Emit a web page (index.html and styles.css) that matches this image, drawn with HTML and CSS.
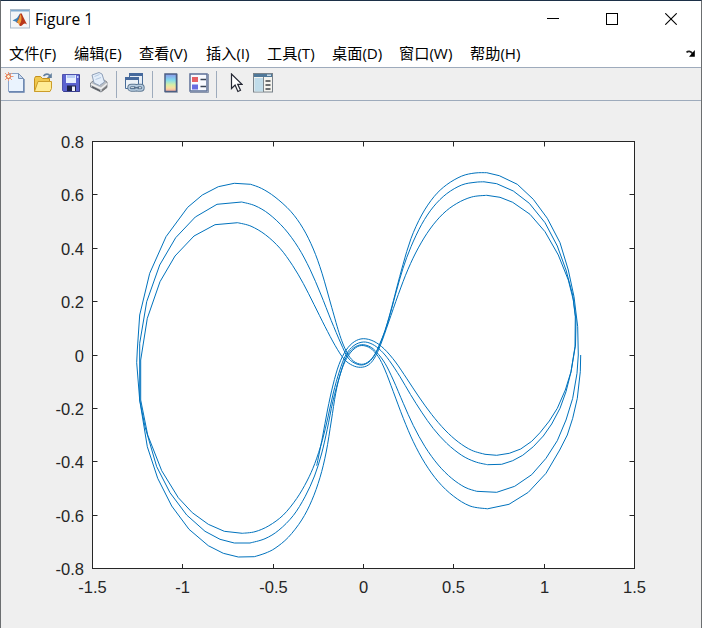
FILE: index.html
```html
<!DOCTYPE html>
<html lang="zh-CN">
<head>
<meta charset="utf-8">
<title>Figure 1</title>
<link rel="stylesheet" href="styles.css">
</head>
<body>
<div class="window">
  <header class="titlebar">
    <svg class="logo" width="20" height="20" viewBox="0 0 20 20">
      <rect x=".5" y=".5" width="19" height="18.5" fill="#f3f5f7" stroke="#a9b9c9"/>
      <path d="M1 1h18v1.5H1z" fill="#7faad0"/>
      <path d="M2.500 11.500 7 9l3-4.500 1.500 2-4 7.500-2-1.500z" fill="#3c7fb5"/>
      <path d="M10 5c1.500-2 2 0 3 2.500l4 8c-2-2-3.500-1-4.500.5-1 1-2 1.500-3 .5C9 14 8 13 6.500 13.500 8.500 11 9 8 10 5z" fill="#b9371b"/>
      <path d="M10.500 5c1.500 3 1.500 8-1.500 11-.5-2-1-3-2.500-2.500 2-2 3-5 4-8.500z" fill="#f0a03c"/>
    </svg>
    <span class="title">Figure 1</span>
    <div class="controls">
      <svg width="12" height="12"><path d="M0 5.500h12" stroke="#000"/></svg>
      <svg width="12" height="12"><rect x=".5" y=".5" width="11" height="11" fill="none" stroke="#000"/></svg>
      <svg width="12" height="12"><path d="M.3.3l11.400 11.400M11.700.3.3 11.700" stroke="#000" stroke-width="1.100"/></svg>
    </div>
  </header>
  <nav class="menubar">
    <span>文件(F)</span><span>编辑(E)</span><span>查看(V)</span><span>插入(I)</span><span>工具(T)</span><span>桌面(D)</span><span>窗口(W)</span><span>帮助(H)</span>
    <svg class="dock" width="10" height="8"><path d="M.5 2.500C2 .8 4.500.8 6.500 3.500" fill="none" stroke="#222" stroke-width="1.800"/><path d="M8.800 0v6.800H3z" fill="#000"/></svg>
  </nav>
  <div class="toolbar">
    <svg class="tool new" width="20" height="22" viewBox="0 0 20 22">
      <path d="M3.500 1.500h10l5 5v13h-15z" fill="#eaf3fe" stroke="#8ba2c5"/><path d="M4 20h15V7" fill="none" stroke="#617eaa" stroke-width="1.300"/><path d="M13.500 1.500v5h5z" fill="#c9daf0" stroke="#7890b5"/>
      <path d="M0 1l7 7M7 1 0 8M3.500 0v9M-.5 4.500h9" stroke="#ef9a78"/><circle cx="3.500" cy="4.500" r="2" fill="#fff0cf" stroke="#dc6439"/>
    </svg>
    <svg class="tool open" width="20" height="22" viewBox="0 0 20 22">
      <path d="M1.500 19.500V6.500l1-2h5l2 2h7v3" fill="#f0c84e" stroke="#c4901d"/><path d="M1.500 19.500 5 9.500h13.500v7l-1.500 3z" fill="#ffec96" stroke="#cc9d29"/><path d="M10.500 4c2-2.500 5-2.500 6.500 0" fill="none" stroke="#63809f" stroke-width="1.600"/><path d="M18.800 1v5h-5z" fill="#63809f"/>
    </svg>
    <svg class="tool save" width="20" height="22" viewBox="0 0 20 22">
      <path d="M1.500 2.500h17v17h-16l-1-1z" fill="#5b62d0" stroke="#5053ad"/><path d="M18.500 3v16.500h-16" fill="none" stroke="#3a3f8f"/><path d="M5 3h10v8H5z" fill="#e7efff"/><path d="M6 3h8v3H6z" fill="#b9ccf6"/><path d="M6 13.500h9V19H6z" fill="#202449"/><path d="M11 14.500h3V19h-3z" fill="#eef1fb"/><path d="M16 4h1.500v2H16z" fill="#c5d2ff"/>
    </svg>
    <svg class="tool print" width="20" height="22" viewBox="0 0 20 22">
      <path d="M1.500 11 6 7.500 12 6l6 4v5.500l-6 4.500-10.500-5z" fill="#b9bdc2" stroke="#858a91"/><path d="m5 11-2-8 7-2.500L13 2l2.500 8-5 3.500z" fill="#e4eefa" stroke="#8fa0b8"/><path d="m5.500 4.500 5-2M6.500 7.500l5.500-2" stroke="#b3c8e0"/><path d="m2 12 10 4.500 6-5" fill="none" stroke="#f0f0f0" stroke-width="1.500"/><path d="m3 14 8 4v1.500l-8-4z" fill="#55585e"/><path d="m13 17.500 5-4v2l-5 4z" fill="#777"/>
    </svg>
    <i class="separator"></i>
    <svg class="tool link" width="20" height="22" viewBox="0 0 20 22">
      <path d="M4.500 1.500h13v11h-13z" fill="#e6edf5" stroke="#496d99"/><path d="M4 1h14v3H4z" fill="#46699c"/><path d="M.5 5.500h13v11H.5z" fill="#edf2f7" stroke="#496d99"/><path d="M0 5h14v3H0z" fill="#46699c"/><g fill="none" stroke="#5f7993" stroke-width="3.400"><rect x="4" y="13.500" width="8" height="4.500" rx="2.200"/><rect x="11" y="13.500" width="7" height="4.500" rx="2.200"/></g><g fill="none" stroke="#b9cee2" stroke-width="1.400"><rect x="4" y="13.500" width="8" height="4.500" rx="2.200"/><rect x="11" y="13.500" width="7" height="4.500" rx="2.200"/></g><path d="M9 15.700h5" stroke="#59718b" stroke-width="1.500"/>
    </svg>
    <i class="separator"></i>
    <svg class="tool colorbar" width="14" height="20" viewBox="0 0 14 20">
      <defs><linearGradient id="spectrum" x2="0" y2="1"><stop stop-color="#8a97ec"/><stop offset=".35" stop-color="#83dced"/><stop offset=".62" stop-color="#d7efa5"/><stop offset=".8" stop-color="#fbdda0"/><stop offset="1" stop-color="#f3a5a0"/></linearGradient></defs><rect x="1" y="1" width="11.500" height="17.500" fill="url(#spectrum)" stroke="#4c5f84" stroke-width="1.500"/><path d="M13.500 1v18.500H1" fill="none" stroke="#9aa3b3"/>
    </svg>
    <svg class="tool legend" width="20" height="20" viewBox="0 0 20 20">
      <rect x="1" y="1" width="17" height="17" fill="#f8faff" stroke="#5d7098" stroke-width="1.500"/><path d="M19.500 1v18.500H1" fill="none" stroke="#8d98ad"/><path d="M3 4h6v5H3z" fill="#e75f63"/><path d="M3 11.500h6v5H3z" fill="#686be0"/><path d="M11.500 6.500H17M11.500 13.500H17" stroke="#394354" stroke-width="1.500"/>
    </svg>
    <i class="separator"></i>
    <svg class="tool pointer" width="13" height="20" viewBox="0 0 13 20"><path d="M1.500 1v14.500l3.600-3.500 2.800 6.500 2.600-1.200-2.800-6H12z" fill="#fff" stroke="#242733" stroke-width="1.200"/></svg>
    <svg class="tool inspector" width="20" height="20" viewBox="0 0 20 20"><rect x=".5" y=".5" width="19" height="18.500" fill="#f4f3ee" stroke="#79828a"/><path d="M1 1h18v3H1z" fill="#4f7899"/><path d="M14 1.500h4v1.500h-4z" fill="#cbdce7"/><path d="M1.500 5h8.500v13.500H1.500z" fill="#c0dcea"/><path d="M10.500 4v15" stroke="#7c868c"/><path d="M12.500 8h5M12.500 12h5M12.500 16h5" stroke="#3d4347" stroke-width="1.600"/></svg>
  </div>
  <main class="figure">
    <svg class="plot" width="700" height="527" viewBox="1 101 700 527">
      <rect x="92.500" y="141.500" width="542" height="427.500" fill="#fff"/>
      <g id="trajectory"></g>
      <rect class="axis" x="92.500" y="141.500" width="542" height="427"/>
      <g id="ticks"></g>
    </svg>
  </main>
</div>
<script src="plot.js"></script>
</body>
</html>
```
FILE: styles.css
```css
* { box-sizing: border-box; }
body { margin: 0; background: #efefef; overflow: hidden; }
.window {
  width: 702px;
  height: 628px;
  display: flex;
  flex-direction: column;
  border: 1px solid #6b6e70;
  border-top-color: #1c3048;
  border-bottom: 0;
  background: #fff;
  font-family: "Open Sans", "Noto Sans CJK SC", sans-serif;
  color: #000;
}
.titlebar {
  height: 36px;
  flex: none;
  display: flex;
  align-items: center;
  padding: 0 24px 0 9px;
}
.title { margin-left: 5px; font-size: 15.6px; line-height: 20px; }
.controls { margin-left: auto; display: flex; gap: 47px; }
.controls svg { display: block; }
.menubar {
  height: 30px;
  flex: none;
  display: flex;
  align-items: center;
  padding: 1px 5px 0 8px;
  font-size: 15.2px;
  line-height: 22px;
  white-space: nowrap;
}
.menubar span { width: 65px; }
.menubar span:nth-child(3) { width: 67px; }
.menubar span:nth-child(4) { width: 61px; }
.menubar span:nth-child(6) { width: 67px; }
.menubar span:nth-child(7) { width: 71px; }
.dock { margin-left: auto; margin-top: 2px; }
.toolbar {
  height: 34px;
  flex: none;
  display: flex;
  align-items: center;
  padding-left: 4px;
  background: #efefef;
  border-top: 1px solid #9eabbc;
  border-bottom: 1px solid #9eabbc;
}
.tool { flex: none; margin-right: 8px; position: relative; top: -1px; }
.print { margin-right: 7px; }
.separator { width: 1px; height: 27px; background: #9eabbc; margin-right: 8px; }
.link { margin-right: 7px; }
.colorbar { margin: 0 11px 0 3px; }
.legend { margin-right: 7px; }
.pointer { margin: 0 10px 0 5px; }
.figure { flex: 1; min-height: 0; background: #efefef; }
.plot { display: block; }
.plot text { font: 16.5px "Liberation Sans", Arial, sans-serif; fill: #262626; }
.x-label { text-anchor: middle; }
.y-label { text-anchor: end; }
.axis { fill: none; stroke: #262626; stroke-width: 1; }
.curve { fill: none; stroke: #0072bd; stroke-width: 1; stroke-linejoin: round; }
```
FILE: plot.js
```js
const NS = "http://www.w3.org/2000/svg";
function add(parent, tag, attrs, text) {
  const el = document.createElementNS(NS, tag);
  for (const key in attrs) el.setAttribute(key, attrs[key]);
  if (text !== undefined) el.textContent = text;
  parent.appendChild(el);
}

const segments = [
  ["L", "580.7,355 580.3,371.7 577.3,398.3 572.7,418.3 567.3,435 559.7,450 546,473.3 528.3,492.3 509,504.3 487.5,508.8"],
  ["C", "487.5,508.8 470,506 453.3,496 438.3,481.7 425,463.3 413.3,441.7 403.3,418.3 393.3,391.7 385,370 378.3,356.7 370.5,348.3 361.7,345.5 354,349 346.7,358.3 340.5,373.3 335.7,393.3 331.3,421 326.2,452 320,477.500 311.7,500.7 301.7,520 288.3,537.3 275,548.3 265,553.3 254.3,556.7"],
  ["L", "254.3,556.7 238.3,557 223.3,553.3 208.3,545.7 189,529.3 171.7,506 157.7,478.3 147.3,446.7 139.7,400 136.7,362.7 137.3,350 139.7,315 149.7,273.3 166,236.7 187.7,207.3 202.3,195 218.3,186.7 234.3,183.3 250.7,184.3"],
  ["C", "250.7,184.3 261.7,188.500 275,197 290.7,211.3 303,228.3 313.3,249 322,273.2 331.7,307.3 340,335.7 346.7,352 353.3,361 361.7,364.3 369,361.3 375,354 380,343.3 385,330.500 390.3,312.5 396.7,288 403,264.5 411,238.500 421.700,215 434,196.700 446.7,184.7 461.7,176.1 475,173 486.7,172.7"],
  ["L", "486.7,172.7 499.3,175.7 517.3,184.3 533.3,199.3 547.3,218.3 560,242.7 568.3,270 574,296.7 577.7,326.7 578.3,355 577,373.3 572.7,398.3 566,420 557.3,440.7 546,458.3 531.7,474.7 514.7,486.3 496.7,492.3 476.7,491.3"],
  ["C", "476.7,491.3 465,487.3 451.7,478.3 438.3,465 425,446.7 413.3,425.5 403.3,403.3 393.3,380 385,363.3 376.7,352.3 370,346.7 361.7,344.7 353.5,348 346.2,357 340,375 332.8,401.7 327.2,429.500 321.500,454 314.500,476 305,496.8 293.3,515.5 278.8,530.2 265,538.7 250,543"],
  ["L", "250,543 234.3,543 220,539.3 205,531.3 186.7,515 170,492.7 156.7,466.7 145,426.7 139.7,400 139.7,343.3 146.7,301.7 159.7,265 175.7,237.7 195.3,217 217,204.3 241.7,202"],
  ["C", "241.7,202 255,205.7 269,214 284.5,228.7 298.3,247.5 310,269.3 320.7,294 331.2,320.5 340.7,343 347.5,357 354,362.8 361.7,365 369,362 375,354.5 380,344 385,331 390.3,313.500 396.700,290 403,268.3 411,246.7 421.7,224.3 433.3,206.9 446.7,193.7 461.7,185 475,182.3 484,181.8"],
  ["L", "484,181.8 496.7,183.7 513.3,191 529.3,203.3 545,222.7 557.3,246 566,270 572.7,295 576,320 575.5,345 571,372 566,391.7 560,408.3 551.7,424 543.3,436 533.3,446.7 522.7,455.3 512.7,460.7 501.7,464.3 487.5,464.7"],
  ["C", "487.5,464.7 475,461.7 461.7,455.3 446.7,443.3 433.3,428.5 421.7,412.2 410.500,394.5 400,376.7 389.3,360.500 381,350.7 372.3,344.2 363.3,342 354,345.500 345.8,355 339.5,371 333.3,393 328,417 322.3,440.500 314.8,463.500 307,481 296.7,498.500 283.3,515 268.8,525.8 255,531.7 242.3,533.3"],
  ["L", "242.3,533.3 224.3,531.3 208.3,524.3 192.3,512.7 178.3,497.7 161.7,470.7 147.7,435 140.7,400 140.7,360 147.3,318.3 160,281.7 175,256 194,236 215,224.7 237.7,222.7"],
  ["C", "237.7,222.7 251,226.2 265.500,234.8 280,248.3 292.500,265.3 303.3,283.5 314,304.5 325,326.500 335,345.3 344,359 352.5,365.4 360.7,367.3 368.3,365 374.5,358 380.5,345 388.7,322 398.3,294.500 408,269.3 418.3,247.9 430,229 443,213.8 456.7,203.500 471.7,197 486.7,195.3"],
  ["L", "486.7,195.3 500,197.3 512.7,202.3 530,214.3 545,231.7 558.3,255 568.3,280 573.3,300 575.3,316.7 575,346.7 571,371.7 565.3,390 557.3,408.3 549.3,421 540,432.7 531.7,441.3 520.7,449 509.3,453.3 496.7,455.3 485,454.3"],
  ["C", "485,454.3 471.7,450.3 458.3,442 445,430 431.7,414.5 419,397 407,378.9 395.500,362 384.3,349 373.8,341.3 363.3,338.7 354.3,341.7 346.2,350 339,364.5 333,385 327.5,410 322.500,437 316.7,465.7"]
];

function curvePath(points) {
  let d = "";
  for (let i = 0; i < points.length - 1; i++) {
    const a = points[Math.max(0, i - 1)], b = points[i];
    const c = points[i + 1], e = points[Math.min(points.length - 1, i + 2)];
    d += `C${b[0] + (c[0] - a[0]) / 6} ${b[1] + (c[1] - a[1]) / 6} ${c[0] - (e[0] - b[0]) / 6} ${c[1] - (e[1] - b[1]) / 6} ${c[0]} ${c[1]}`;
  }
  return d;
}

let path = "M580.7 355";
for (const [kind, data] of segments) {
  const points = data.split(" ").map(p => p.split(",").map(Number));
  path += kind === "L" ? points.map(p => "L" + p.join(" ")).join("") : curvePath(points);
}
add(document.getElementById("trajectory"), "path", { class: "curve", d: path });

const ticks = document.getElementById("ticks");
["-1.5", "-1", "-0.5", "0", "0.5", "1", "1.5"].forEach((label, i) => {
  const x = Math.round(92 + i * 90.333) + .5;
  add(ticks, "path", { class: "axis", d: `M${x} 569v-5M${x} 141.5v5` });
  add(ticks, "text", { class: "x-label", x: x, y: 593 }, label);
});
["0.8", "0.6", "0.4", "0.2", "0", "-0.2", "-0.4", "-0.6", "-0.8"].forEach((label, i) => {
  const y = Math.round(141 + i * 53.4) + .5;
  add(ticks, "path", { class: "axis", d: `M92.5 ${y}h5M634.5 ${y}h-5` });
  add(ticks, "text", { class: "y-label", x: 84, y: y + 6 }, label);
});
```
